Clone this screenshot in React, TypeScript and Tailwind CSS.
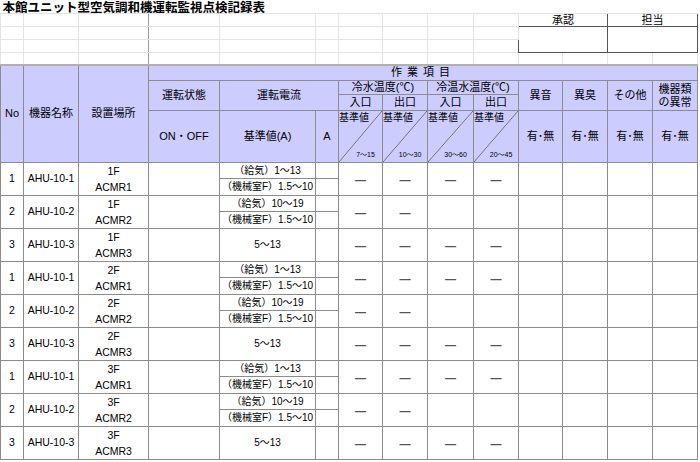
const FONT = "font-['Liberation_Sans','Noto_Sans_CJK_JP',sans-serif]";

type Row = {
  no: string;
  name: string;
  floor: string;
  room: string;
  ref: string[];
  dashes: number;
};

const rows: Row[] = [
  { no: "1", name: "AHU-10-1", floor: "1F", room: "ACMR1", ref: ["（給気）1～13", "（機械室F）1.5～10"], dashes: 4 },
  { no: "2", name: "AHU-10-2", floor: "1F", room: "ACMR2", ref: ["（給気）10～19", "（機械室F）1.5～10"], dashes: 2 },
  { no: "3", name: "AHU-10-3", floor: "1F", room: "ACMR3", ref: ["5～13"], dashes: 4 },
  { no: "1", name: "AHU-10-1", floor: "2F", room: "ACMR1", ref: ["（給気）1～13", "（機械室F）1.5～10"], dashes: 4 },
  { no: "2", name: "AHU-10-2", floor: "2F", room: "ACMR2", ref: ["（給気）10～19", "（機械室F）1.5～10"], dashes: 2 },
  { no: "3", name: "AHU-10-3", floor: "2F", room: "ACMR3", ref: ["5～13"], dashes: 4 },
  { no: "1", name: "AHU-10-1", floor: "3F", room: "ACMR1", ref: ["（給気）1～13", "（機械室F）1.5～10"], dashes: 4 },
  { no: "2", name: "AHU-10-2", floor: "3F", room: "ACMR2", ref: ["（給気）10～19", "（機械室F）1.5～10"], dashes: 2 },
  { no: "3", name: "AHU-10-3", floor: "3F", room: "ACMR3", ref: ["5～13"], dashes: 4 },
];

const ranges = ["7～15", "10～30", "30～60", "20～45"];

const faint = "p-0 border border-[#e4e4e4]";
const th = "p-0 border border-[#8c8c8c] bg-[#ccccff] font-normal text-[11px] leading-[13px] text-black text-center align-middle whitespace-nowrap";
const td = "p-0 border border-[#8c8c8c] text-center align-middle text-black whitespace-nowrap overflow-hidden";

function FaintCells({ count }: { count: number }) {
  return (
    <>
      {Array.from({ length: count }).map((_, i) => (
        <td
          key={i}
          className={
            i === 2
              ? "p-0 border border-[#e4e4e4] border-r-[#9a9a9a]"
              : faint
          }
        />
      ))}
    </>
  );
}

function Dash() {
  return <span className="text-[11px] leading-[12px] font-bold text-[#555]">—</span>;
}

export default function App() {
  return (
    <div className={`w-[700px] h-[462px] bg-white overflow-hidden ${FONT}`}>
      <table className="table-fixed border-collapse w-[697px]">
        <colgroup>
          <col className="w-[23px]" />
          <col className="w-[55px]" />
          <col className="w-[70px]" />
          <col className="w-[71px]" />
          <col className="w-[96px]" />
          <col className="w-[23px]" />
          <col className="w-[44px]" />
          <col className="w-[45px]" />
          <col className="w-[46px]" />
          <col className="w-[45px]" />
          <col className="w-[44px]" />
          <col className="w-[45px]" />
          <col className="w-[45px]" />
          <col className="w-[45px]" />
        </colgroup>
        <tbody>
          {/* sheet title */}
          <tr className="h-[13px]">
            <td
              colSpan={3}
              className="p-0 border-b border-b-[#e4e4e4] border-r border-r-[#9a9a9a] whitespace-nowrap overflow-visible align-top"
            >
              <span className="block h-[13px] pl-[2px] text-[12.5px] font-bold leading-[17px] text-black">
                本館ユニット型空気調和機運転監視点検記録表
              </span>
            </td>
            <td colSpan={11} className="p-0 border-b border-b-[#e4e4e4]" />
          </tr>
          <tr className="h-[13px]">
            <FaintCells count={10} />
            <td colSpan={2} className="p-0 border border-[#555] text-center text-[11px] leading-[12px]">
              承認
            </td>
            <td colSpan={2} className="p-0 border border-[#555] text-center text-[11px] leading-[12px]">
              担当
            </td>
          </tr>
          <tr className="h-[13px]">
            <FaintCells count={10} />
            <td colSpan={2} rowSpan={2} className="p-0 border border-[#555]" />
            <td colSpan={2} rowSpan={2} className="p-0 border border-[#555]" />
          </tr>
          <tr className="h-[13px]">
            <FaintCells count={10} />
          </tr>
          <tr className="h-[12px]">
            <FaintCells count={14} />
          </tr>

          {/* header */}
          <tr className="h-[16px]">
            <th rowSpan={4} className={`${th} border-t-2 border-t-[#b0b0b0]`}>
              No
            </th>
            <th rowSpan={4} className={`${th} border-t-2 border-t-[#b0b0b0]`}>
              機器名称
            </th>
            <th rowSpan={4} className={`${th} border-t-2 border-t-[#b0b0b0]`}>
              設置場所
            </th>
            <th colSpan={11} className={`${th} border-t-2 border-t-[#b0b0b0] tracking-[5px]`}>
              作業項目
            </th>
          </tr>
          <tr className="h-[14px]">
            <th rowSpan={2} className={th}>
              運転状態
            </th>
            <th rowSpan={2} colSpan={2} className={th}>
              運転電流
            </th>
            <th colSpan={2} className={th}>
              冷水温度(℃)
            </th>
            <th colSpan={2} className={th}>
              冷温水温度(℃)
            </th>
            <th rowSpan={2} className={th}>
              異音
            </th>
            <th rowSpan={2} className={th}>
              異臭
            </th>
            <th rowSpan={2} className={th}>
              その他
            </th>
            <th rowSpan={2} className={th}>
              機器類
              <br />
              の異常
            </th>
          </tr>
          <tr className="h-[16px]">
            <th className={th}>入口</th>
            <th className={th}>出口</th>
            <th className={th}>入口</th>
            <th className={th}>出口</th>
          </tr>
          <tr className="h-[52px]">
            <th className={`${th} text-[8.5px]`}>ON・OFF</th>
            <th className={th}>基準値(A)</th>
            <th className={th}>A</th>
            {ranges.map((r) => (
              <th key={r} className={th}>
                <div className="h-[51px] flex flex-col justify-between bg-[linear-gradient(to_bottom_right,transparent_calc(50%-0.7px),#6f6f6f_50%,transparent_calc(50%+0.7px))]">
                  <span className="text-left text-[10px] leading-[12px] pt-[1px]">基準値</span>
                  <span className="pl-[10px] text-center text-[7px] leading-[10px] pb-[2px]">{r}</span>
                </div>
              </th>
            ))}
            <th className={th}>有･無</th>
            <th className={th}>有･無</th>
            <th className={th}>有･無</th>
            <th className={th}>有･無</th>
          </tr>

          {/* data */}
          {rows.map((r, i) => {
            const split = r.ref.length > 1;
            return [
              <tr key={`${i}a`} className="h-[16px]">
                <td rowSpan={2} className={`${td} text-[10.5px]`}>
                  {r.no}
                </td>
                <td rowSpan={2} className={`${td} text-[10.5px]`}>
                  {r.name}
                </td>
                <td rowSpan={2} className={`${td} text-[10.5px] leading-[16px]`}>
                  {r.floor}
                  <br />
                  {r.room}
                </td>
                <td rowSpan={2} className={td} />
                <td rowSpan={split ? 1 : 2} className={`${td} text-[10px] leading-[14px]`}>
                  {r.ref[0]}
                </td>
                <td rowSpan={split ? 1 : 2} className={td} />
                {[0, 1, 2, 3].map((k) => (
                  <td key={k} rowSpan={2} className={td}>
                    {k < r.dashes ? <Dash /> : null}
                  </td>
                ))}
                <td rowSpan={2} className={td} />
                <td rowSpan={2} className={td} />
                <td rowSpan={2} className={td} />
                <td rowSpan={2} className={td} />
              </tr>,
              <tr key={`${i}b`} className="h-[17px]">
                {split && (
                  <>
                    <td className={`${td} text-[10px] leading-[14px]`}>{r.ref[1]}</td>
                    <td className={td} />
                  </>
                )}
              </tr>,
            ];
          })}
        </tbody>
      </table>
    </div>
  );
}
